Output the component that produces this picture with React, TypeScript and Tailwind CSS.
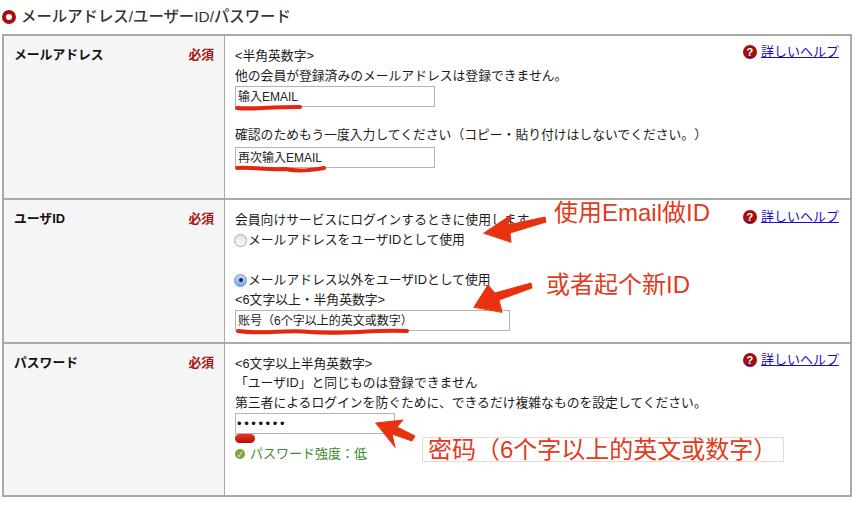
const jp = "font-['Liberation_Sans','Noto_Sans_CJK_JP',sans-serif]";
const sc = "font-['Liberation_Sans','Noto_Sans_CJK_SC',sans-serif]";

function HelpLink({ high }: { high?: boolean }) {
  return (
    <a href="#" className={`float-right ${high ? "mt-[-4px]" : "mt-[-3px]"} mr-[11px] flex items-center gap-[4px] text-[13px] leading-[20px] text-[#1a0dcc] underline`}>
      <span className="flex h-[14px] w-[14px] items-center justify-center rounded-full bg-[#a50e0a] text-[11px] font-bold text-white no-underline">?</span>
      詳しいヘルプ
    </a>
  );
}

function LabelCell({ label }: { label: string }) {
  return (
    <div className="flex w-[220px] shrink-0 justify-between bg-[#f5f5f5] pr-[10px] pl-[10px] text-[12.8px] font-bold">
      <span className="text-[#111]">{label}</span>
      <span className="text-[12.8px] text-[#a5140f]">必須</span>
    </div>
  );
}

function TextBox({ value, width }: { value: string; width: string }) {
  return (
    <div className={`h-[21px] ${width} border border-[#b4b4b4] bg-white pl-[2px] text-[12px] leading-[20px] text-[#222]`}>
      {value}
    </div>
  );
}

function Radio({ checked }: { checked?: boolean }) {
  if (checked) {
    return (
      <span className="-ml-[1px] mr-[1px] flex h-[13px] w-[13px] shrink-0 items-center justify-center rounded-full border border-[#6f8fc4] bg-gradient-to-b from-[#c5d8f3] to-[#7fa9e4]">
        <span className="h-[4px] w-[4px] rounded-full bg-[#10264d]" />
      </span>
    );
  }
  return <span className="-ml-[1px] mr-[1px] h-[13px] w-[13px] shrink-0 rounded-full border border-[#a8a8a8] bg-gradient-to-b from-[#e2e2e2] to-[#fafafa]" />;
}

function Annotations() {
  return (
    <svg className="pointer-events-none absolute top-0 left-0" width="857" height="506" fill="none" strokeLinecap="round" strokeLinejoin="round">
      <g stroke="#e8260f">
        <path d="M237 108 C250 110 265 107 300 107" strokeWidth="4" />
        <path d="M237 168 C255 167 265 170 285 169 C300 172 312 170 324 168" strokeWidth="4" />
        <path d="M238 331 C265 335 285 329 310 332 C345 335 375 329 407 331" strokeWidth="4" />
      </g>
      <g fill="#e8320f" stroke="#e8320f" strokeWidth="1">
        <path d="M484 233 L511 215 L508 225 L545 217 L546 222 L510 233 L511 242 Z" />
        <path d="M474 307 L488 285 L495 293 L531 283 L532 288 L499 300 L502 312 Z" />
        <path d="M376 423 L403 420 L397 427 L415 436 L412 441 L392 434 L395 447 Z" />
      </g>
    </svg>
  );
}

export default function App() {
  return (
    <div className={`relative h-[506px] w-[857px] overflow-hidden bg-white text-[12.8px] leading-[20px] text-[#1c1c1c] [text-spacing-trim:space-all] ${jp}`}>
      <div className="flex h-[34px] items-center gap-[5px] pl-[2px]">
        <span className="h-[14px] w-[14px] rounded-full border-[4px] border-[#a50e0a] bg-white" />
        <h2 className="text-[15.4px] font-medium text-[#333]">メールアドレス/ユーザーID/パスワード</h2>
      </div>

      <div className="ml-[2px] w-[850px] border-2 border-[#a9a9a9]">
        <div className="flex h-[162px]">
          <div className="flex bg-[#f5f5f5] pt-[9px]">
            <LabelCell label="メールアドレス" />
          </div>
          <div className="flex-1 border-l border-[#a9a9a9] pt-[10px] pl-[10px]">
            <HelpLink high />
            <div>&lt;半角英数字&gt;</div>
            <div>他の会員が登録済みのメールアドレスは登録できません。</div>
            <TextBox value="输入EMAIL" width="w-[200px]" />
            <div className="mt-[18px] mb-[2px]">確認のためもう一度入力してください（コピー・貼り付けはしないでください。）</div>
            <TextBox value="再次输入EMAIL" width="w-[200px]" />
          </div>
        </div>

        <div className="flex h-[144px] border-t-2 border-[#a9a9a9]">
          <div className="flex bg-[#f5f5f5] pt-[9px]">
            <LabelCell label="ユーザID" />
          </div>
          <div className="flex-1 border-l border-[#a9a9a9] pt-[10px] pl-[10px]">
            <HelpLink />
            <div>会員向けサービスにログインするときに使用します。</div>
            <div className="flex items-center"><Radio />メールアドレスをユーザIDとして使用</div>
            <div className="mt-[20px] flex items-center"><Radio checked />メールアドレス以外をユーザIDとして使用</div>
            <div>&lt;6文字以上・半角英数字&gt;</div>
            <TextBox value="账号（6个字以上的英文或数字）" width="w-[275px]" />
          </div>
        </div>

        <div className="flex h-[153px] border-t-2 border-[#a9a9a9]">
          <div className="flex bg-[#f5f5f5] pt-[9px]">
            <LabelCell label="パスワード" />
          </div>
          <div className="flex-1 border-l border-[#a9a9a9] pt-[10px] pl-[10px]">
            <HelpLink high />
            <div>&lt;6文字以上半角英数字&gt;</div>
            <div className="-mt-[1px]">「ユーザID」と同じものは登録できません</div>
            <div>第三者によるログインを防ぐために、できるだけ複雑なものを設定してください。</div>
            <div className="h-[21px] w-[160px] border border-[#b4b4b4] bg-white pl-[1px] text-[13px] leading-[19px] tracking-[2.6px] text-[#111]">•••••••</div>
            <div className="h-[9px] w-[20px] rounded-full bg-gradient-to-b from-[#e53527] to-[#b50d08]" />
            <div className="mt-[1px] flex items-center gap-[5px] text-[#3c8a2a]">
              <span className="flex h-[10px] w-[10px] items-center justify-center rounded-full bg-[#7fa33a] text-[7px] leading-none text-white">✓</span>
              <span className="text-[13px]">パスワード強度：低</span>
            </div>
          </div>
        </div>
      </div>

      <Annotations />

      <span className={`absolute top-[197px] left-[554px] text-[24px] leading-[32px] whitespace-nowrap text-[#e23a1c] ${sc}`}>使用Email做ID</span>
      <span className={`absolute top-[269px] left-[546px] text-[24px] leading-[32px] whitespace-nowrap text-[#e23a1c] ${sc}`}>或者起个新ID</span>
      <span className={`absolute top-[437px] left-[422px] h-[25px] w-[362px] border border-[#f6d5d0] bg-white pl-[5px] text-[24px] leading-[24px] whitespace-nowrap text-[#e23a1c] ${sc}`}>密码（6个字以上的英文或数字）</span>
    </div>
  );
}
